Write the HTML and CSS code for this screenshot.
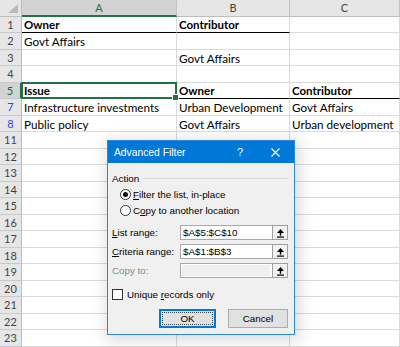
FILE: index.html
```html
<!DOCTYPE html>
<html>
<head>
<meta charset="utf-8">
<link rel="stylesheet" href="styles.css">
</head>
<body>
<div class="sheet">
  <div class="corner"><span class="tri"></span></div>
  <div class="colhead sel">A</div>
  <div class="colhead">B</div>
  <div class="colhead">C</div>

  <div class="rowhead">1</div>
  <div class="cell b hdr">Owner</div>
  <div class="cell b hdr">Contributor</div>
  <div class="cell"></div>

  <div class="rowhead">2</div>
  <div class="cell">Govt Affairs</div>
  <div class="cell"></div>
  <div class="cell"></div>

  <div class="rowhead">3</div>
  <div class="cell"></div>
  <div class="cell">Govt Affairs</div>
  <div class="cell"></div>

  <div class="rowhead">4</div>
  <div class="cell"></div>
  <div class="cell"></div>
  <div class="cell"></div>

  <div class="rowhead rsel">5</div>
  <div class="cell b hdr active">Issue<span class="handle"></span></div>
  <div class="cell b hdr">Owner</div>
  <div class="cell b hdr">Contributor</div>

  <div class="rowhead blue">7</div>
  <div class="cell">Infrastructure investments</div>
  <div class="cell">Urban Development</div>
  <div class="cell">Govt Affairs</div>

  <div class="rowhead blue">8</div>
  <div class="cell">Public policy</div>
  <div class="cell">Govt Affairs</div>
  <div class="cell">Urban development</div>

  <div class="rowhead">11</div><div class="cell"></div><div class="cell"></div><div class="cell"></div>
  <div class="rowhead">12</div><div class="cell"></div><div class="cell"></div><div class="cell"></div>
  <div class="rowhead">13</div><div class="cell"></div><div class="cell"></div><div class="cell"></div>
  <div class="rowhead">14</div><div class="cell"></div><div class="cell"></div><div class="cell"></div>
  <div class="rowhead">15</div><div class="cell"></div><div class="cell"></div><div class="cell"></div>
  <div class="rowhead">16</div><div class="cell"></div><div class="cell"></div><div class="cell"></div>
  <div class="rowhead">17</div><div class="cell"></div><div class="cell"></div><div class="cell"></div>
  <div class="rowhead">18</div><div class="cell"></div><div class="cell"></div><div class="cell"></div>
  <div class="rowhead">19</div><div class="cell"></div><div class="cell"></div><div class="cell"></div>
  <div class="rowhead">20</div><div class="cell"></div><div class="cell"></div><div class="cell"></div>
  <div class="rowhead">21</div><div class="cell"></div><div class="cell"></div><div class="cell"></div>
  <div class="rowhead">22</div><div class="cell"></div><div class="cell"></div><div class="cell"></div>
  <div class="rowhead">23</div><div class="cell"></div><div class="cell"></div><div class="cell"></div>
</div>

<div class="dialog">
  <div class="titlebar">
    <span class="title">Advanced Filter</span>
    <span class="help">?</span>
    <span class="close">
      <svg width="9" height="9" viewBox="0 0 9 9"><path d="M0.5 0.5L8.5 8.5M8.5 0.5L0.5 8.5" stroke="#fff" stroke-width="1.1" fill="none"/></svg>
    </span>
  </div>
  <div class="body">
    <div class="group"><span>Action</span><span class="line"></span></div>
    <div class="radio-row"><span class="radio on"></span><span><u>F</u>ilter the list, in-place</span></div>
    <div class="radio-row"><span class="radio"></span><span>C<u>o</u>py to another location</span></div>

    <div class="field first"><span class="label"><u>L</u>ist range:</span>
      <span class="ref"><span class="val">$A$5:$C$10</span><span class="refbtn"><svg width="9" height="10" viewBox="0 0 9 10"><path d="M4.5 1L8 5H1Z" fill="#000"/><rect x="3.8" y="4.5" width="1.4" height="3.2" fill="#000"/><rect x="1" y="8.5" width="7" height="1.2" fill="#000"/></svg></span></span>
    </div>
    <div class="field"><span class="label"><u>C</u>riteria range:</span>
      <span class="ref"><span class="val">$A$1:$B$3</span><span class="refbtn"><svg width="9" height="10" viewBox="0 0 9 10"><path d="M4.5 1L8 5H1Z" fill="#000"/><rect x="3.8" y="4.5" width="1.4" height="3.2" fill="#000"/><rect x="1" y="8.5" width="7" height="1.2" fill="#000"/></svg></span></span>
    </div>
    <div class="field"><span class="label dis">Copy to:</span>
      <span class="ref disabled"><span class="val"></span><span class="refbtn"><svg width="9" height="10" viewBox="0 0 9 10"><path d="M4.5 1L8 5H1Z" fill="#000"/><rect x="3.8" y="4.5" width="1.4" height="3.2" fill="#000"/><rect x="1" y="8.5" width="7" height="1.2" fill="#000"/></svg></span></span>
    </div>

    <div class="check-row"><span class="check"></span><span>Unique <u>r</u>ecords only</span></div>

    <div class="buttons">
      <span class="btn ok"><span class="focus">OK</span></span>
      <span class="btn cancel">Cancel</span>
    </div>
  </div>
</div>
</body>
</html>
```

FILE: styles.css
```css
html, body {
  margin: 0;
  padding: 0;
  background: #fff;
  overflow: hidden;
}
body {
  width: 400px;
  height: 347px;
  position: relative;
}

.sheet {
  display: grid;
  grid-template-columns: 22px 155px 113px 110px;
  grid-auto-rows: 16.5px;
  font-family: "Lato", "Liberation Sans", sans-serif;
  font-size: 11.7px;
  color: #000;
}

.corner {
  background: #e6e6e6;
  border-right: 1px solid #bdbdbd;
  border-bottom: 1px solid #bdbdbd;
  box-sizing: border-box;
  position: relative;
}
.corner .tri {
  position: absolute;
  right: 3px;
  bottom: 3px;
  width: 0;
  height: 0;
  border-left: 10px solid transparent;
  border-bottom: 9px solid #b9b9b9;
}

.colhead {
  background: #e6e6e6;
  border-right: 1px solid #c4c4c4;
  border-bottom: 1px solid #bdbdbd;
  box-sizing: border-box;
  text-align: center;
  font-size: 11px;
  line-height: 16px;
  color: #444;
}
.colhead.sel {
  background: #d3d3d3;
  color: #217346;
  border-bottom: 2px solid #217346;
}

.rowhead {
  background: #e6e6e6;
  border-right: 1px solid #bdbdbd;
  border-bottom: 1px solid #c9c9c9;
  box-sizing: border-box;
  text-align: center;
  font-size: 11px;
  line-height: 16px;
  color: #444;
}
.rowhead.blue {
  color: #2f47f0;
}
.rowhead.rsel {
  background: #d3d3d3;
  color: #2f5a3f;
  border-right: 2px solid #217346;
}

.cell {
  border-right: 1px solid #dadada;
  border-bottom: 1px solid #dadada;
  box-sizing: border-box;
  padding-left: 2px;
  line-height: 16px;
  white-space: nowrap;
  overflow: visible;
}
.cell.b {
  font-weight: bold;
  font-size: 11.5px;
}
.cell.hdr {
  border-bottom: 1px solid #000;
}
.cell.active {
  position: relative;
}
.cell.active::after {
  content: "";
  position: absolute;
  left: -1px;
  top: -1px;
  right: -1px;
  bottom: -1px;
  border: 2px solid #217346;
}
.handle {
  position: absolute;
  right: -3px;
  bottom: -3px;
  width: 5px;
  height: 5px;
  background: #217346;
  border: 1px solid #fff;
  z-index: 2;
}

/* Dialog */
.dialog {
  position: absolute;
  left: 107px;
  top: 140px;
  width: 188px;
  height: 195px;
  box-sizing: border-box;
  border: 1px solid #2b87d9;
  background: #f0f0f0;
  box-shadow: 2px 3px 14px 3px rgba(0, 0, 0, 0.14);
  font-family: "Liberation Sans", Arial, sans-serif;
  font-size: 9.8px;
  color: #000;
  display: flex;
  flex-direction: column;
}
.titlebar {
  height: 22px;
  background: #0078d7;
  color: #fff;
  display: flex;
  align-items: center;
  padding-left: 6px;
  flex: none;
}
.title {
  font-size: 10.3px;
  flex: 1;
}
.help {
  font-size: 11px;
  width: 14px;
  text-align: center;
  margin-right: 24px;
}
.close {
  display: flex;
  margin-right: 14px;
}

.body {
  padding: 0 6px 0 4px;
  display: flex;
  flex-direction: column;
}
.group {
  display: flex;
  align-items: center;
  height: 14px;
  margin-top: 8px;
}
.group .line {
  flex: 1;
  height: 1px;
  background: #d9d9d9;
  margin-left: 5px;
}

.radio-row {
  display: flex;
  align-items: center;
  height: 16px;
  padding-left: 8px;
}
.group + .radio-row {
  margin-top: 1px;
}
.radio {
  width: 11px;
  height: 11px;
  box-sizing: border-box;
  border: 1px solid #333;
  border-radius: 50%;
  background: #fff;
  margin-right: 2px;
  display: flex;
  align-items: center;
  justify-content: center;
}
.radio.on::after {
  content: "";
  width: 5px;
  height: 5px;
  border-radius: 50%;
  background: #000;
}

.field {
  display: flex;
  align-items: center;
  height: 19px;
}
.field.first {
  margin-top: 5px;
}
.label {
  width: 68px;
  flex: none;
}
.label.dis {
  color: #8a8a8a;
}
.ref {
  display: flex;
  width: 108px;
  height: 15px;
  box-sizing: border-box;
  border: 1px solid #a9a9a9;
  background: #fff;
}
.ref .val {
  flex: 1;
  padding-left: 2px;
  line-height: 13px;
}
.ref.disabled .val {
  background: #efefef;
  margin: 1px 2px 1px 1px;
}
.refbtn {
  width: 16px;
  box-sizing: border-box;
  border: 1px solid #a0a0a0;
  background: #f2f2f2;
  display: flex;
  align-items: center;
  justify-content: center;
  margin: -1px -1px -1px 0;
  height: 15px;
}

.check-row {
  display: flex;
  align-items: center;
  height: 14px;
  margin-top: 7px;
}
.check {
  width: 11px;
  height: 11px;
  box-sizing: border-box;
  border: 1px solid #333;
  background: #fff;
  margin-right: 4px;
}

.buttons {
  display: flex;
  justify-content: flex-end;
  gap: 12px;
  margin-top: 8px;
}
.btn {
  height: 19px;
  box-sizing: border-box;
  background: #e1e1e1;
  border: 1px solid #adadad;
  display: flex;
  align-items: center;
  justify-content: center;
}
.btn.ok {
  width: 57px;
  border: 1px solid #0078d7;
  box-shadow: inset 0 0 0 1px #0078d7;
  padding: 2px;
}
.btn.ok .focus {
  flex: 1;
  align-self: stretch;
  border: 1px dotted #444;
  display: flex;
  align-items: center;
  justify-content: center;
}
.btn.cancel {
  width: 60px;
}
```
